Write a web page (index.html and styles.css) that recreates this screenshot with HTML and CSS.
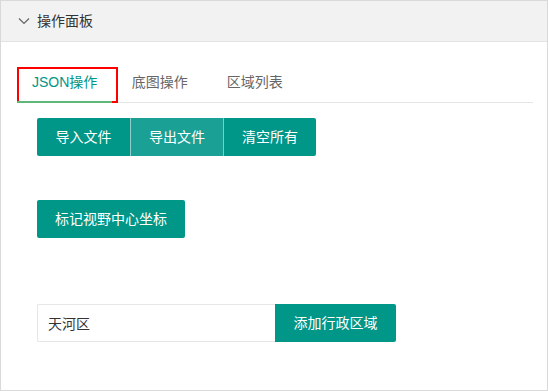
FILE: index.html
```html
<!DOCTYPE html>
<html lang="zh-CN">
<head>
    <meta charset="UTF-8">
    <title>操作面板</title>
    <link rel="stylesheet" href="styles.css">
</head>
<body>
    <div class="collapse">
        <h2 class="colla-title">
            <svg class="colla-icon" width="12" height="8" viewBox="0 0 12 8">
                <path d="M1 1.5 L6 6.5 L11 1.5" fill="none" stroke="#666" stroke-width="1.2"/>
            </svg>
            操作面板
        </h2>
        <div class="colla-content">
            <div class="tab">
                <ul class="tab-title">
                    <li class="this marked">JSON操作</li>
                    <li>底图操作</li>
                    <li>区域列表</li>
                </ul>
                <div class="tab-item">
                    <div class="btn-group">
                        <button class="btn">导入文件</button>
                        <button class="btn hover">导出文件</button>
                        <button class="btn">清空所有</button>
                    </div>

                    <div class="row-mark">
                        <button class="btn">标记视野中心坐标</button>
                    </div>

                    <div class="row-area">
                        <input class="input" type="text" value="天河区">
                        <button class="btn btn-attach">添加行政区域</button>
                    </div>
                </div>
            </div>
        </div>
    </div>
</body>
</html>
```

FILE: styles.css
```css
* {
    margin: 0;
    padding: 0;
    box-sizing: border-box;
}

body {
    font-family: "Liberation Sans", "Noto Sans CJK SC", sans-serif;
    font-size: 14px;
    color: #333;
    background: #fff;
}

.collapse {
    width: 548px;
    height: 391px;
    border: 1px solid #d9d9d9;
}

.colla-title {
    height: 41px;
    line-height: 40px;
    padding-left: 36px;
    position: relative;
    background: #f2f2f2;
    border-bottom: 1px solid #e2e2e2;
    font-size: 14px;
    font-weight: normal;
    color: #333;
}

.colla-icon {
    position: absolute;
    left: 17px;
    top: 16px;
}

.colla-content {
    padding: 20px 14px 0 16px;
}

.tab-title {
    list-style: none;
    display: flex;
    height: 41px;
    border-bottom: 1px solid #e6e6e6;
}

.tab-title li {
    position: relative;
    min-width: 65px;
    padding: 0 15px;
    line-height: 40px;
    text-align: center;
    color: #666;
    box-sizing: content-box;
}

.tab-title li.this {
    color: #009688;
}

.tab-title li.this:after {
    content: "";
    position: absolute;
    left: 0;
    right: 0;
    bottom: -1px;
    border-bottom: 2px solid #5fb878;
}

.tab-title li.marked:before {
    content: "";
    position: absolute;
    left: 0;
    top: 5px;
    width: 97px;
    height: 32px;
    border: 2px solid #f00;
}

.tab-item {
    padding: 15px 0 0 20px;
}

.btn {
    height: 38px;
    line-height: 38px;
    padding: 0 18px;
    border: none;
    border-radius: 2px;
    background: #009688;
    color: #fff;
    font-family: inherit;
    font-size: 14px;
    white-space: nowrap;
    cursor: pointer;
}

.btn-group {
    display: flex;
}

.btn-group .btn {
    border-radius: 0;
    width: 93px;
    padding: 0;
}

.btn-group .btn + .btn {
    border-left: 1px solid rgba(255, 255, 255, 0.5);
}

.btn-group .btn:first-child {
    border-radius: 2px 0 0 2px;
}

.btn-group .btn:last-child {
    border-radius: 0 2px 2px 0;
}

.btn.hover {
    background: #1aa094;
}

.row-mark {
    margin-top: 44px;
}

.row-area {
    display: flex;
    margin-top: 66px;
}

.input {
    width: 238px;
    height: 38px;
    padding-left: 10px;
    border: 1px solid #e6e6e6;
    border-right: none;
    border-radius: 2px 0 0 2px;
    font-family: inherit;
    font-size: 14px;
    color: #333;
    outline: none;
}

.btn-attach {
    width: 121px;
    padding: 0;
    border-radius: 0 2px 2px 0;
}
```
